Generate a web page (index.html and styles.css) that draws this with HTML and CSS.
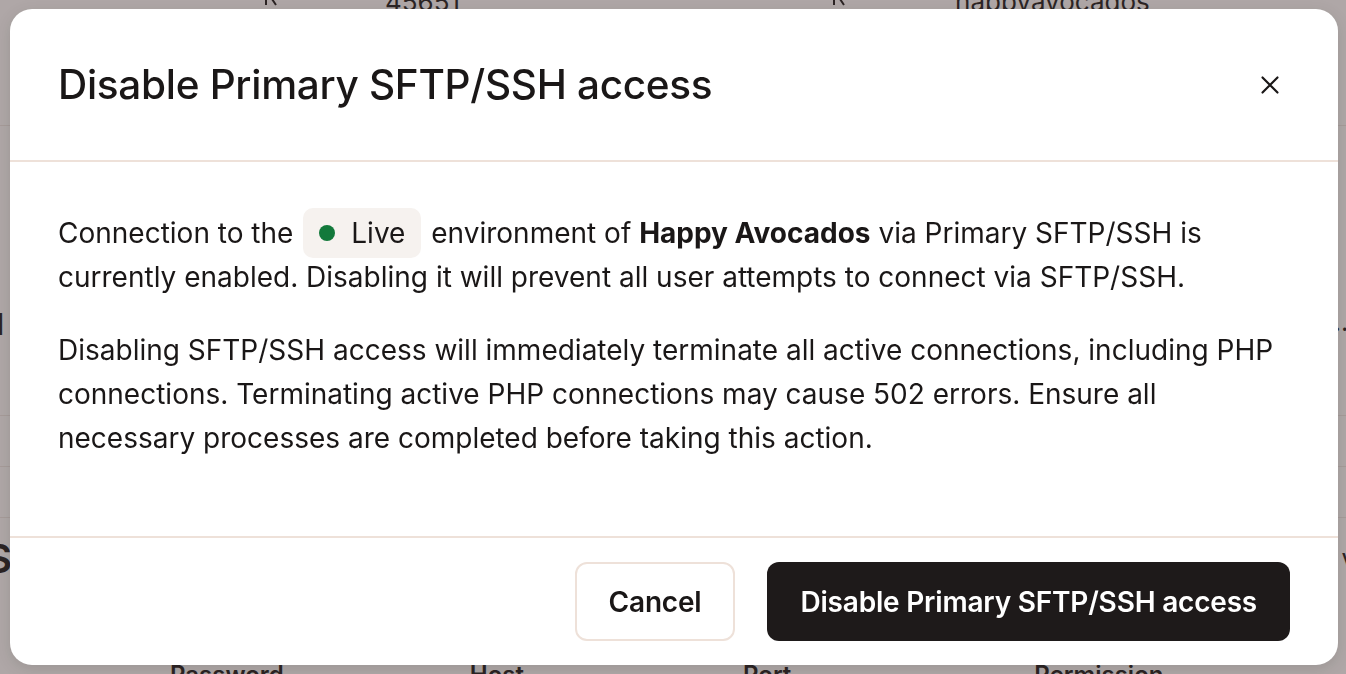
FILE: index.html
```html
<!DOCTYPE html>
<html lang="en">
<head>
  <meta charset="UTF-8" />
  <meta name="viewport" content="width=device-width, initial-scale=1.0"/>
  <title>SFTP/SSH - Happy Avocados</title>
  <link rel="stylesheet" href="styles.css">
</head>
<body>

  <!-- page behind the dialog -->
  <main class="page">
    <div class="row row-top">
      <span class="cell cell-icon">
        <svg width="18" height="22" viewBox="0 0 18 22"><path d="M4 0v16M10 0v10l4 6" fill="none" stroke="#1a1717" stroke-width="2"/></svg>
      </span>
      <span class="cell cell-id">45651</span>
      <span class="cell cell-icon">
        <svg width="18" height="22" viewBox="0 0 18 22"><path d="M4 0v16M10 0v10l4 6" fill="none" stroke="#1a1717" stroke-width="2"/></svg>
      </span>
      <span class="cell cell-user">happyavocados</span>
    </div>
    <div class="row row-mid">
      <span class="cell cell-edge">d</span>
      <span class="cell cell-more">...</span>
    </div>
    <div class="row row-thin"></div>
    <div class="row row-thin"></div>
    <div class="row row-heading">
      <span class="cell cell-edge heading">S</span>
      <span class="cell cell-more">v</span>
    </div>
    <div class="row row-labels">
      <span class="cell label-a">Password</span>
      <span class="cell label-b">Host</span>
      <span class="cell label-c">Port</span>
      <span class="cell label-d">Permission</span>
    </div>
  </main>

  <div class="overlay">
    <section class="modal" role="dialog" aria-labelledby="modal-title">
      <header class="modal-header">
        <h2 id="modal-title">Disable Primary SFTP/SSH access</h2>
        <button class="close-btn" aria-label="Close">
          <svg width="20" height="20" viewBox="0 0 20 20"><path d="M2.5 2.5l15 15M17.5 2.5l-15 15" stroke="#1a1717" stroke-width="2.2" stroke-linecap="round"/></svg>
        </button>
      </header>

      <div class="modal-body">
        <p>
          Connection to the
          <span class="env-badge"><span class="dot"></span>Live</span>
          environment of <strong>Happy Avocados</strong> via Primary SFTP/SSH is
          currently enabled. Disabling it will prevent all user attempts to connect via SFTP/SSH.
        </p>
        <p>
          Disabling SFTP/SSH access will immediately terminate all active connections, including PHP
          connections. Terminating active PHP connections may cause 502 errors. Ensure all
          necessary processes are completed before taking this action.
        </p>
      </div>

      <footer class="modal-footer">
        <button class="btn btn-secondary">Cancel</button>
        <button class="btn btn-primary">Disable Primary SFTP/SSH access</button>
      </footer>
    </section>
  </div>

</body>
</html>
```

FILE: styles.css
```css
* {
  box-sizing: border-box;
  margin: 0;
  padding: 0;
}

body {
  font-family: Inter, 'Noto Sans', sans-serif;
  background-color: #fbf9f8;
  color: #1a1717;
  height: 674px;
  overflow: hidden;
}

/* background page */

.page {
  display: flex;
  flex-direction: column;
  height: 674px;
  overflow: hidden;
}

.row {
  display: flex;
  align-items: center;
  flex-shrink: 0;
  border-bottom: 1px solid #ece4e0;
  font-size: 26px;
}

.row-top {
  height: 140px;
  align-items: flex-start;
  margin-top: -14px;
}

.row-top .cell-icon:first-child {
  margin-left: 262px;
}

.cell-id {
  margin-left: 105px;
}

.row-top .cell-icon:nth-child(3) {
  margin-left: 370px;
}

.row-top .cell-user {
  margin-left: 107px;
}

.row-mid {
  height: 290px;
  padding-top: 180px;
  justify-content: space-between;
  align-items: flex-start;
}

.cell-edge {
  margin-left: -14px;
  font-size: 30px;
}

.cell-more {
  margin-right: -10px;
}

.row-thin {
  height: 51px;
}

.row-heading {
  height: 80px;
  justify-content: space-between;
  align-items: center;
  border-bottom: none;
}

.heading {
  font-size: 40px;
  font-weight: 600;
}

.row-labels {
  border-bottom: none;
  font-size: 24px;
  font-weight: 600;
  margin-top: 62px;
}

.label-a { margin-left: 170px; }
.label-b { margin-left: 186px; }
.label-c { margin-left: 219px; }
.label-d { margin-left: 243px; }

/* dialog */

.overlay {
  position: fixed;
  inset: 0;
  background-color: rgba(70, 55, 55, 0.42);
  display: flex;
  align-items: flex-start;
  padding: 9px 8px 0 10px;
}

.modal {
  flex: 1;
  background: #fff;
  border-radius: 22px;
  box-shadow: 0 4px 16px rgba(0, 0, 0, 0.12);
  overflow: hidden;
}

.modal-header {
  display: flex;
  align-items: center;
  justify-content: space-between;
  padding: 52px 48px;
  border-bottom: 2px solid #eee1d9;
}

.modal-header h2 {
  font-size: 40.5px;
  font-weight: 500;
  line-height: 47px;
  letter-spacing: -0.3px;
}

.close-btn {
  background: none;
  border: none;
  display: flex;
  margin-right: 10px;
  cursor: pointer;
}

.modal-body {
  padding: 49px 48px 76px;
  font-size: 28px;
  line-height: 44px;
  border-bottom: 2px solid #eee1d9;
}

.modal-body p + p {
  margin-top: 29px;
}

.modal-body strong {
  font-weight: 700;
}

.env-badge {
  display: inline-flex;
  align-items: center;
  gap: 16px;
  background-color: #f6f2ef;
  border-radius: 10px;
  padding: 3px 16px;
  margin: -3px 2px;
  line-height: 44px;
  vertical-align: top;
}

.env-badge .dot {
  width: 16px;
  height: 16px;
  border-radius: 50%;
  background-color: #13793b;
}

.modal-footer {
  display: flex;
  justify-content: flex-end;
  gap: 32px;
  padding: 24px 48px;
}

.btn {
  font-family: inherit;
  font-size: 28px;
  font-weight: 600;
  height: 79px;
  padding: 0 32px;
  border-radius: 12px;
  letter-spacing: -0.2px;
  cursor: pointer;
}

.btn-secondary {
  background: #fff;
  color: #1a1717;
  border: 2px solid #eee1d9;
}

.btn-primary {
  background-color: #1e1a1a;
  color: #fff;
  border: none;
  padding: 0 33px;
}
```
